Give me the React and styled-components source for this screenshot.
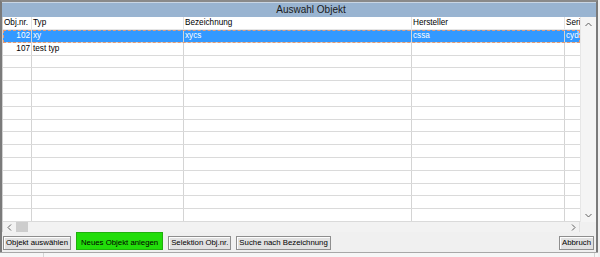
import React from 'react';
import styled, { createGlobalStyle } from 'styled-components';

const GlobalStyle = createGlobalStyle`
  html, body {
    margin: 0;
    padding: 0;
    background: #f0f0f0;
    font-family: "Liberation Sans", Arial, sans-serif;
  }
`;

// column widths of the list view
const columns = [
    { key: 'nr', title: 'Obj.nr.', width: 29, align: 'right' },
    { key: 'typ', title: 'Typ', width: 152 },
    { key: 'bez', title: 'Bezeichnung', width: 228 },
    { key: 'her', title: 'Hersteller', width: 153 },
    { key: 'ser', title: 'Serie', width: 40 },
];

const rows = [
    { nr: '102', typ: 'xy', bez: 'xycs', her: 'cssa', ser: 'cyds', selected: true },
    { nr: '107', typ: 'test typ', bez: '', her: '', ser: '' },
];

const EMPTY_ROWS = 14;

export default function App() {
    const template = columns.map(c => `${c.width}px`).join(' ');

    const filled = [...rows];
    for (let i = 0; i < EMPTY_ROWS; i++) {
        filled.push({ nr: '', typ: '', bez: '', her: '', ser: '' });
    }

    return (
        <>
            <GlobalStyle />
            <Window>
                <TitleBar>Auswahl Objekt</TitleBar>
                <ListArea>
                    <List>
                        <HeaderRow $template={template}>
                            {columns.map(c => (
                                <HeaderCell key={c.key}>{c.title}</HeaderCell>
                            ))}
                        </HeaderRow>
                        {filled.map((row, i) => (
                            <Row key={`row-${i}`} $template={template} $selected={row.selected}>
                                {columns.map(c => (
                                    <Cell key={c.key} $align={c.align}>{row[c.key]}</Cell>
                                ))}
                            </Row>
                        ))}
                    </List>
                    <VScroll>
                        <Arrow>
                            <svg width="7" height="5" viewBox="0 0 7 5"><path d="M0.5 4 L3.5 1 L6.5 4" fill="none" stroke="#606060" strokeWidth="1" /></svg>
                        </Arrow>
                        <Arrow>
                            <svg width="7" height="5" viewBox="0 0 7 5"><path d="M0.5 1 L3.5 4 L6.5 1" fill="none" stroke="#606060" strokeWidth="1" /></svg>
                        </Arrow>
                    </VScroll>
                </ListArea>
                <HScroll>
                    <HTrack>
                        <HArrow>
                            <svg width="5" height="7" viewBox="0 0 5 7"><path d="M4 0.5 L1 3.5 L4 6.5" fill="none" stroke="#606060" strokeWidth="1" /></svg>
                        </HArrow>
                        <Thumb />
                        <Spacer />
                        <HArrow>
                            <svg width="5" height="7" viewBox="0 0 5 7"><path d="M1 0.5 L4 3.5 L1 6.5" fill="none" stroke="#606060" strokeWidth="1" /></svg>
                        </HArrow>
                    </HTrack>
                    <Corner />
                </HScroll>
                <ButtonBar>
                    <Button>Objekt auswählen</Button>
                    <Button $highlight>Neues Objekt anlegen</Button>
                    <Button>Selektion Obj.nr.</Button>
                    <Button>Suche nach Bezeichnung</Button>
                    <Spacer />
                    <Button>Abbruch</Button>
                </ButtonBar>
            </Window>
            <BottomStrip>
                <StripCell $width={43} />
                <StripCell $width={550} />
            </BottomStrip>
        </>
    );
}

const Window = styled.div`
    width: 598px;
    height: 252px;
    box-sizing: border-box;
    border-top: 2px solid #8a8a8a;
    border-left: 2px solid #7a7a7a;
    border-right: 2px solid #7a7a7a;
    display: flex;
    flex-direction: column;
    background: #f0f0f0;
`;

const TitleBar = styled.div`
    height: 15px;
    box-sizing: border-box;
    border-top: 1px solid #c9d6e4;
    background: #99b4d1;
    color: #1a1a1a;
    font-size: 10px;
    line-height: 14px;
    text-align: center;
    padding-left: 24px;
`;

const ListArea = styled.div`
    height: 205px;
    display: flex;
    background: #ffffff;
    border-left: 1px solid #d0d0d0;
`;

const List = styled.div`
    flex: 1;
    overflow: hidden;
`;

const HeaderRow = styled.div`
    display: grid;
    grid-template-columns: ${props => props.$template};
    height: 13px;
    box-sizing: border-box;
    border-bottom: 1px solid #e5e5e5;
`;

const HeaderCell = styled.div`
    font-size: 8.2px;
    line-height: 12px;
    color: #000;
    padding-left: 1px;
    border-right: 1px solid #e3e3e3;
    white-space: nowrap;
    overflow: hidden;
`;

const Row = styled.div`
    display: grid;
    grid-template-columns: ${props => props.$template};
    height: 12.8px;
    box-sizing: border-box;
    border-bottom: 1px solid #dadada;
    background: ${props => props.$selected ? '#3399ff' : '#ffffff'};
    color: ${props => props.$selected ? '#ffffff' : '#000000'};
    outline: ${props => props.$selected ? '1px dashed #e59a73' : 'none'};
    outline-offset: -1px;
`;

const Cell = styled.div`
    font-size: 8.2px;
    line-height: 11.8px;
    text-align: ${props => props.$align || 'left'};
    padding: 0 1px;
    border-right: 1px solid #d4d4d4;
    white-space: nowrap;
    overflow: hidden;
`;

const VScroll = styled.div`
    width: 15px;
    background: #f4f4f4;
    border-left: 1px solid #e6e6e6;
    display: flex;
    flex-direction: column;
    justify-content: space-between;
`;

const Arrow = styled.div`
    height: 14px;
    display: flex;
    align-items: center;
    justify-content: center;
`;

const HScroll = styled.div`
    height: 11px;
    display: flex;
    background: #f0f0f0;
    border-left: 1px solid #d0d0d0;
    border-bottom: 1px solid #9a9a9a;
`;

const HTrack = styled.div`
    flex: 1;
    display: flex;
    align-items: stretch;
    background: #f2f2f2;
`;

const HArrow = styled.div`
    width: 12px;
    display: flex;
    align-items: center;
    justify-content: center;
`;

const Thumb = styled.div`
    width: 12px;
    margin: 0 1px;
    background: #cdcdcd;
`;

const Spacer = styled.div`
    flex: 1;
`;

const Corner = styled.div`
    width: 16px;
    background: #f0f0f0;
    border-left: 1px solid #e0e0e0;
`;

const ButtonBar = styled.div`
    flex: 1;
    display: flex;
    align-items: flex-end;
    gap: 5px;
    padding: 0 2px 2px 1px;
    margin-top: -2px;
    background: #f0f0f0;
`;

const Button = styled.button`
    height: ${props => props.$highlight ? '18px' : '14px'};
    box-sizing: border-box;
    margin: 0;
    padding: ${props => props.$highlight ? '3px 4px 0' : '0 2px'};
    font-family: "Liberation Sans", Arial, sans-serif;
    font-size: 7.8px;
    line-height: 12px;
    color: #000;
    white-space: nowrap;
    background: ${props => props.$highlight ? '#22dd0a' : '#e1e1e1'};
    border: 1px solid ${props => props.$highlight ? '#1fb00c' : '#8e8e8e'};
    box-shadow: ${props => props.$highlight ? 'none' : 'inset 1px 1px #fdfdfd'};
    border-radius: 0;
`;

const BottomStrip = styled.div`
    height: 5px;
    width: 598px;
    display: flex;
    border-top: 1px solid #a8a8a8;
    background: #f7f7f7;
`;

const StripCell = styled.div`
    width: ${props => props.$width}px;
    border-right: 1px solid #d6d6d6;
`;
